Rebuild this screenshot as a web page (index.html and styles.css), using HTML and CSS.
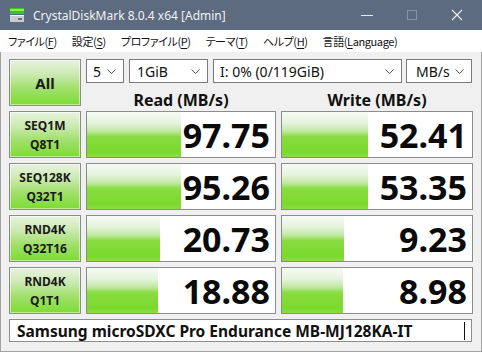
FILE: index.html
```
<!DOCTYPE html>
<html>
<head>
    <title>CrystalDiskMark 8.0.4 x64 [Admin]</title>
    <link rel="stylesheet" href="styles.css">
</head>
<body>

<div class="window">
    <div class="titlebar">
        <svg class="app-icon" width="16" height="16" viewBox="0 0 16 16">
            <rect x="1" y="1" width="14" height="6" fill="#3fc12a"/>
            <rect x="1" y="2" width="14" height="2" fill="#8ee86a"/>
            <rect x="1" y="8" width="14" height="7" fill="#c9ccd0"/>
            <rect x="1" y="8" width="14" height="1" fill="#eef0f2"/>
            <rect x="9" y="11" width="4" height="2" fill="#6b7079"/>
        </svg>
        <span class="title">CrystalDiskMark 8.0.4 x64 [Admin]</span>
        <div class="controls">
            <svg width="14" height="14" viewBox="0 0 14 14"><line x1="1" y1="7.5" x2="13" y2="7.5" stroke="#e4e7eb" stroke-width="1"/></svg>
            <svg width="14" height="14" viewBox="0 0 14 14"><rect x="2.5" y="2.5" width="9" height="9" fill="none" stroke="#8793a3" stroke-width="1"/></svg>
            <svg width="14" height="14" viewBox="0 0 14 14"><path d="M2 2 L12 12 M12 2 L2 12" stroke="#eef0f3" stroke-width="1.1"/></svg>
        </div>
    </div>

    <div class="menubar">
        <span>ファイル(<u>F</u>)</span>
        <span>設定(<u>S</u>)</span>
        <span>プロファイル(<u>P</u>)</span>
        <span>テーマ(<u>T</u>)</span>
        <span>ヘルプ(<u>H</u>)</span>
        <span>言語(<u>L</u>anguage)</span>
    </div>

    <div class="main">
        <div class="grid">
            <div class="all">All</div>
            <div class="combos">
                <div class="combo c-count">5<svg class="chev" width="9" height="5" viewBox="0 0 9 5"><polyline points="0.5,0.5 4.5,4.5 8.5,0.5" fill="none" stroke="#555" stroke-width="1"/></svg></div>
                <div class="combo c-size">1GiB<svg class="chev" width="9" height="5" viewBox="0 0 9 5"><polyline points="0.5,0.5 4.5,4.5 8.5,0.5" fill="none" stroke="#555" stroke-width="1"/></svg></div>
                <div class="combo c-drive">I: 0% (0/119GiB)<svg class="chev" width="9" height="5" viewBox="0 0 9 5"><polyline points="0.5,0.5 4.5,4.5 8.5,0.5" fill="none" stroke="#555" stroke-width="1"/></svg></div>
                <div class="combo c-unit">MB/s<svg class="chev" width="9" height="5" viewBox="0 0 9 5"><polyline points="0.5,0.5 4.5,4.5 8.5,0.5" fill="none" stroke="#555" stroke-width="1"/></svg></div>
            </div>
            <div class="head">Read (MB/s)</div>
            <div class="head">Write (MB/s)</div>

            <div class="label">SEQ1M<br>Q8T1</div>
            <div class="result"><div class="bar" style="width: 94px"></div><span class="value">97.75</span></div>
            <div class="result"><div class="bar" style="width: 86px"></div><span class="value">52.41</span></div>

            <div class="label">SEQ128K<br>Q32T1</div>
            <div class="result"><div class="bar" style="width: 94px"></div><span class="value">95.26</span></div>
            <div class="result"><div class="bar" style="width: 86px"></div><span class="value">53.35</span></div>

            <div class="label">RND4K<br>Q32T16</div>
            <div class="result"><div class="bar" style="width: 73px"></div><span class="value">20.73</span></div>
            <div class="result"><div class="bar" style="width: 62px"></div><span class="value">9.23</span></div>

            <div class="label">RND4K<br>Q1T1</div>
            <div class="result"><div class="bar" style="width: 71px"></div><span class="value">18.88</span></div>
            <div class="result"><div class="bar" style="width: 61px"></div><span class="value">8.98</span></div>

            <div class="comment">Samsung microSDXC Pro Endurance MB-MJ128KA-IT<span class="caret"></span></div>
        </div>
    </div>
</div>

</body>
</html>
```

FILE: styles.css
```
body {
    margin: 0;
    font-family: "Noto Sans", "Noto Sans CJK JP", sans-serif;
    background-color: #f0f0f0;
}

.window {
    width: 482px;
    height: 352px;
    overflow: hidden;
}

.titlebar {
    height: 30px;
    background-color: #5c6b7f;
    display: flex;
    align-items: center;
    padding-left: 9px;
}

.app-icon {
    margin-right: 8px;
}

.title {
    color: #f0f2f5;
    font-size: 12px;
}

.controls {
    margin-left: auto;
    display: flex;
    align-items: center;
    gap: 31px;
    padding-right: 18px;
}

.controls svg {
    display: block;
}

.menubar {
    height: 22px;
    background-color: white;
    display: flex;
    align-items: center;
    padding-left: 8px;
    gap: 15px;
    font-family: "Noto Sans CJK JP", sans-serif;
    font-feature-settings: "palt";
    font-size: 11px;
    letter-spacing: -0.4px;
    color: #111;
}

.menubar u {
    text-underline-offset: 2px;
}

.main {
    border: 1px solid #a3a3a3;
    border-top: none;
    padding: 6px 0 0 8px;
    box-sizing: border-box;
    height: 300px;
    background-color: #f0f0f0;
}

.grid {
    display: grid;
    grid-template-columns: 72px 190px 192px;
    grid-template-rows: 24px 18px 47px 47px 47px 47px 23px;
    column-gap: 5px;
    row-gap: 5px;
    margin-top: 1px;
}

.all,
.label {
    border: 1px solid #8c8c8c;
    background: linear-gradient(to bottom, #e8f4e0 0%, #cdeab4 30%, #a2e06e 62%, #7ddc32 100%);
    box-shadow: inset 0 0 0 1px rgba(255, 255, 255, 0.5);
    display: flex;
    align-items: center;
    justify-content: center;
    text-align: center;
    font-weight: bold;
    color: #1a1a1a;
    box-sizing: border-box;
}

.all {
    grid-row: 1 / 3;
    font-size: 15px;
}

.label {
    font-size: 12px;
    line-height: 19px;
}

.combos {
    grid-column: 2 / 4;
    display: flex;
    gap: 5px;
}

.combo {
    height: 24px;
    box-sizing: border-box;
    border: 1px solid #7a7a7a;
    background-color: white;
    display: flex;
    align-items: center;
    padding: 0 7px 0 6px;
    font-size: 14px;
    color: #111;
}

.chev {
    margin-left: auto;
}

.c-count { width: 38px; }
.c-size { width: 79px; padding-left: 7px; }
.c-drive { width: 189px; }
.c-unit { width: 66px; margin-left: -1px; padding-left: 9px; }

.head {
    font-size: 16px;
    font-weight: bold;
    text-align: center;
    line-height: 18px;
    padding-top: 3px;
    color: #111;
}

.result {
    border: 1px solid #8c8c8c;
    background-color: white;
    display: flex;
    align-items: center;
    box-sizing: border-box;
}

.bar {
    align-self: stretch;
    background: linear-gradient(to bottom, #f7fbf4 0%, #e6f3de 24%, #c2e8a4 42%, #88dc40 55%, #7bd92c 88%, #8adc48 100%);
}

.value {
    margin-left: auto;
    padding-right: 5px;
    font-size: 34px;
    font-weight: bold;
    color: #0a0a0a;
    line-height: 1;
}

.comment {
    grid-column: 1 / 4;
    border: 1px solid #8c8c8c;
    background-color: white;
    display: flex;
    align-items: center;
    padding-left: 7px;
    font-size: 15.5px;
    font-weight: bold;
    color: #111;
    box-sizing: border-box;
    width: 463px;
}

.caret {
    margin-left: auto;
    margin-right: 6px;
    width: 1px;
    height: 18px;
    background-color: #111;
}
```
